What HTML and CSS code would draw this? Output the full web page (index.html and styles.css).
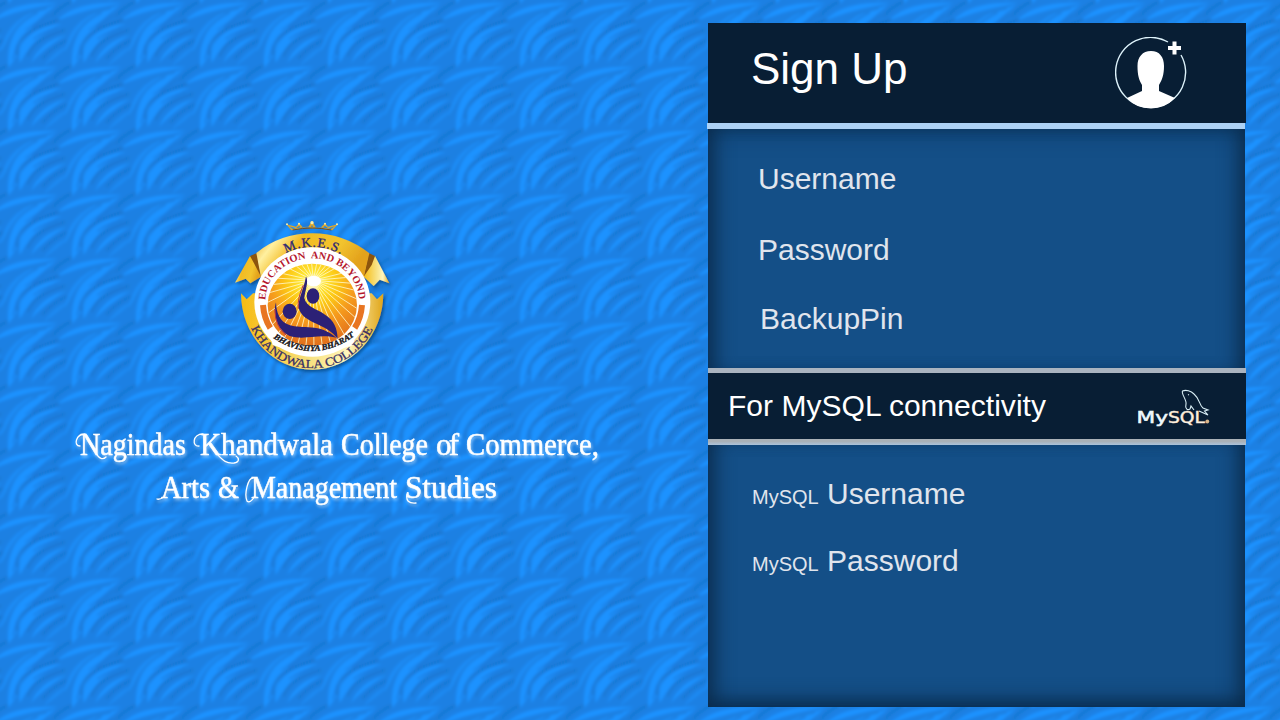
FILE: index.html
```html
<!DOCTYPE html>
<html lang="en">
<head>
<meta charset="utf-8">
<title>Sign Up</title>
<link rel="stylesheet" href="styles.css">
</head>
<body>
<svg class="backdrop" width="1280" height="720" aria-hidden="true">
  <defs>
    <filter id="soft" x="0" y="0" width="100%" height="100%"><feGaussianBlur stdDeviation="1.500"/></filter>
    <g id="ripples">
      <g fill="#1f92ff">
        <path d="M-8 21C8 5 32 2 58 3C36 7 14 12 -8 21Z"/>
        <path d="M8 68C7 45 12 18 56 5C38 19 26 32 22 43C18 53 15 61 8 68Z"/>
        <path d="M20 63C15 42 34 25 62 24C44 31 32 42 20 63Z"/>
        <path d="M31 63C36 49 50 38 66 35C52 44 42 51 31 63Z"/>
        <path d="M44 66C50 56 60 48 70 45C62 52 54 59 44 66Z" fill="#1d8af3"/>
        <path d="M1 52C3 36 12 20 34 12C20 25 10 36 1 52Z" fill="#1e8cf6"/>
      </g>
      <g fill="none" stroke-linecap="round" opacity=".8">
        <path d="M-2 36C10 17 27 11 46 9" stroke="#1a7fdf" stroke-width="1.800"/>
        <path d="M2 56C9 36 17 22 37 13" stroke="#1a7edf" stroke-width="2"/>
        <path d="M17 54C17 37 29 29 58 20" stroke="#1874cf" stroke-width="3"/>
        <path d="M26 30L48 14M33 27L53 14" stroke="#1878d8" stroke-width="1.500"/>
        <path d="M28 55C33 43 44 37 64 30" stroke="#1874cf" stroke-width="2.800"/>
        <path d="M34 39C39 34 47 31 57 28" stroke="#1878d8" stroke-width="1.500"/>
        <path d="M43 58C49 51 57 45 66 41" stroke="#1875d1" stroke-width="3"/>
        <path d="M13 59L17 45" stroke="#1878d8" stroke-width="1.500"/>
        <path d="M53 15C59 8 63 5 71 2" stroke="#1876d3" stroke-width="4"/>
      </g>
    </g>
    <pattern id="waves" width="64" height="64" patternUnits="userSpaceOnUse">
      <rect width="64" height="64" fill="#1b80e3"/>
      <use href="#ripples" x="-64"/><use href="#ripples" x="64"/><use href="#ripples" y="-64"/><use href="#ripples" y="64"/><use href="#ripples"/>
    </pattern>
  </defs>
  <rect x="-10" y="-10" width="1300" height="740" fill="url(#waves)" filter="url(#soft)"/>
</svg>

<main class="page">
  <section class="brand">
    <svg class="crest" viewBox="0 0 525 510" role="img" aria-label="College crest">
      <defs>
        <linearGradient id="gold" x1="0" y1="0" x2="1" y2="0.3">
          <stop offset="0" stop-color="#e9a512"/><stop offset=".2" stop-color="#fff0a0"/><stop offset=".4" stop-color="#f3bb22"/><stop offset=".75" stop-color="#f2c42f"/><stop offset="1" stop-color="#e3a21c"/>
        </linearGradient>
        <linearGradient id="gold2" x1="0" y1="0" x2="1" y2="0">
          <stop offset="0" stop-color="#f6bb12"/><stop offset=".5" stop-color="#f8e283"/><stop offset=".75" stop-color="#fff6bd"/><stop offset="1" stop-color="#e0a519"/>
        </linearGradient>
        <radialGradient id="sun" cx=".5" cy=".22" r=".8">
          <stop offset="0" stop-color="#fff"/><stop offset=".14" stop-color="#ffe936"/><stop offset=".36" stop-color="#fcc715"/><stop offset=".6" stop-color="#f59a1d"/><stop offset="1" stop-color="#df6a1c"/>
        </radialGradient>
        <filter id="drop" x="-10%" y="-10%" width="125%" height="125%"><feDropShadow dx="5" dy="7" stdDeviation="4" flood-color="#06376c" flood-opacity=".65"/></filter>
        <clipPath id="disc"><ellipse cx="262" cy="285" rx="134" ry="124"/></clipPath>
        <path id="arcTop" d="M96 276A166 166 0 0 1 428 276"/>
        <path id="arcMotto" d="M121 272A140 127 0 0 1 401 272"/>
        <path id="arcBharat" d="M137 378Q262 470 394 374"/>
        <path id="arcCollege" d="M66 314A200 200 0 0 0 458 314"/>
      </defs>
      <g filter="url(#drop)">
        <path d="M48 250L65 268L84 250L440 250L456 268L475 250A213.500 229 0 0 1 48 250Z" fill="url(#gold2)"/>
        <path d="M75 138L30 218L62 206L76 220L108 200L96 150Z" fill="url(#gold)"/>
        <path d="M450 138L493 220L464 209L446 228L416 200L424 145Z" fill="url(#gold2)"/>
        <path d="M96 129L108 200L87 160L75 138ZM431 129L416 200L440 165L450 138Z" fill="#8c5411"/>
        <path d="M94 129Q166 70 262 70Q356 70 433 130L416 202H108Z" fill="url(#gold)"/>
      </g>
      <ellipse cx="262" cy="276" rx="174" ry="164" fill="#fff"/>
      <ellipse cx="262" cy="285" rx="134" ry="124" fill="url(#sun)"/>
      <g clip-path="url(#disc)" stroke="#fff6c8" stroke-width="2.500">
        <path d="M265 211L80 170M265 211L80 200M265 211L80 230M265 211L80 263M265 211L80 300M265 211L80 345M265 211L90 400M265 211L120 430M265 211L155 430M265 211L185 430M265 211L212 430M265 211L240 430M265 211L267 430M265 211L295 430M265 211L325 430M265 211L355 430M265 211L390 430M265 211L440 430M265 211L450 375M265 211L450 330M265 211L450 290M265 211L450 255M265 211L450 225M265 211L450 195M265 211L450 165M265 211L430 120M265 211L390 110M265 211L350 110M265 211L315 110M265 211L285 110M265 211L255 110M265 211L225 110M265 211L190 110M265 211L145 110M265 211L100 130"/>
      </g>
      <path d="M130 360Q262 454 395 358L385 405Q262 450 143 405Z" fill="#fff"/>
      <ellipse cx="266" cy="213" rx="22" ry="16" fill="#fff"/>
      <path d="M114 285Q117 325 136 354M411 285Q408 325 389 354" fill="none" stroke="#e87522" stroke-width="18"/>
      <g fill="#2c2176">
        <path d="M243 199C252 215 240 244 238 264C243 291 276 296 300 314C328 332 337 355 338 387C308 340 234 342 221 294C219 266 236 240 243 199Z"/>
        <path d="M153 277C154 307 163 335 193 345C232 358 284 339 334 383C277 371 238 392 194 378C160 363 141 315 153 277Z"/>
      </g>
      <path d="M235 225Q216 268 220 296M150 297Q149 350 184 376" fill="none" stroke="#b8334b" stroke-width="3"/>
      <g fill="#2c2176"><ellipse cx="194" cy="304" rx="21" ry="23"/><ellipse cx="264" cy="258" rx="19" ry="23"/></g>
      <g class="crest-text">
        <text font-size="40" fill="#2d2775" stroke="#2d2775"><textPath href="#arcTop" startOffset="178" textLength="172">M.K.E.S.</textPath></text>
        <text font-size="31" font-weight="bold" fill="#b5172d"><textPath href="#arcMotto" startOffset="2" textLength="414" lengthAdjust="spacingAndGlyphs" xml:space="preserve">EDUCATION  AND BEYOND</textPath></text>
        <text font-size="25" font-weight="bold" font-style="italic" fill="#161214" stroke="#161214"><textPath href="#arcBharat" startOffset="10" textLength="262" lengthAdjust="spacingAndGlyphs">BHAVISHYA BHARAT</textPath></text>
        <text font-size="36" fill="#393064" stroke="#393064" stroke-width=".800"><textPath href="#arcCollege" startOffset="42" textLength="460" lengthAdjust="spacingAndGlyphs">KHANDWALA COLLEGE</textPath></text>
      </g>
      <path d="M199 61L184 43L213 50L222 40L235 53L250 51L261 33L272 51L286 53L300 40L309 50L338 43L322 61Q262 48 199 61ZM192 49L204 57Q231 49 258 51L261 45L264 51Q292 50 317 57L330 49L310 55L300 48L288 56L261 50L235 56L222 48L213 55Z" fill="#dca62d" fill-rule="evenodd"/>
      <path d="M203 60Q262 48 319 60" fill="none" stroke="#6b4b2a" stroke-width="3"/>
      <g fill="#fff0a5"><circle cx="261" cy="38" r="5"/><circle cx="222" cy="41" r="3"/><circle cx="300" cy="41" r="3"/><circle cx="186" cy="43" r="3"/><circle cx="336" cy="43" r="3"/></g>
    </svg>

    <svg class="college" viewBox="0 0 560 100">
      <g class="college-name">
        <text x="20" y="35" textLength="106" lengthAdjust="spacingAndGlyphs">Nagindas</text>
        <text x="140" y="35" textLength="133" lengthAdjust="spacingAndGlyphs">Khandwala</text>
        <text x="281" y="35" textLength="87" lengthAdjust="spacingAndGlyphs">College</text>
        <text x="376" y="35" textLength="23">of</text>
        <text x="406" y="35" textLength="133" lengthAdjust="spacingAndGlyphs">Commerce,</text>
        <text x="101" y="78" textLength="49" lengthAdjust="spacingAndGlyphs">Arts</text>
        <text x="158" y="78" textLength="21" lengthAdjust="spacingAndGlyphs">&amp;</text>
        <text x="191" y="78" textLength="146" lengthAdjust="spacingAndGlyphs">Management</text>
        <text x="345" y="78" textLength="92" lengthAdjust="spacingAndGlyphs">Studies</text>
      </g>
      <g class="swash">
        <path d="M25 14C16 14 13 26 20 26M143 14C132 14 132 27 139 26M156 33C162 39 165 44 174 43C180 42 179 38 176 36M36 33C39 39 43 40 46 37"/>
        <path d="M104 77Q99 80 97 79M193 58C188 58 184 74 187 81Q190 84 195 76M347 74Q345 84 356 83"/>
      </g>
    </svg>
  </section>

  <section class="panel">
    <header class="head">
      <h1>Sign Up</h1>
      <svg class="avatar" viewBox="0 0 72 72" aria-hidden="true">
        <path d="M53 5A35 35 0 1 0 66 18" fill="none" stroke="#def3fb" stroke-width="1.400"/>
        <path d="M36 14C44.500 14 49 20 49 29C49 38 47 43 44 48V54L60 61Q50 71.500 36 71.500Q21 71.500 12 61L27 54V48C24 43 22.500 38 22.500 29C22.500 20 27.500 14 36 14Z" fill="#fff"/>
        <path d="M53 11H66M59.500 4.500V17.500" stroke="#fff" stroke-width="4"/>
      </svg>
    </header>
    <div class="rule rule-top"></div>
    <div class="fields account">
      <label>Username</label>
      <label>Password</label>
      <label class="pin">BackupPin</label>
    </div>
    <div class="rule rule-mid"></div>
    <header class="subhead">
      <h2>For MySQL connectivity</h2>
      <svg class="mysql" viewBox="0 0 90 50">
        <text x="6.500" y="39" textLength="31.500" lengthAdjust="spacingAndGlyphs" fill="#eef9fc" stroke="#eef9fc">My</text>
        <text x="38" y="39" textLength="37" lengthAdjust="spacingAndGlyphs" fill="#fffaf0" stroke="#f3dcc0">SQL</text>
        <circle cx="77.300" cy="37.500" r="1.900" fill="#d8b58a"/>
        <path d="M60 25C57 27 55 24 56 20C57 16 51 10 52.500 7C56 5.500 61 7 64 10C70 15 69 21 73 24L78 26L74.500 27L78 31L69 27M60 25L61 22L64 26M58 10.500L59 11" fill="none" stroke="#d9eef5" stroke-width="1.100"/>
      </svg>
    </header>
    <div class="rule rule-low"></div>
    <div class="fields database">
      <label><small>MySQL</small> Username</label>
      <label><small>MySQL</small> Password</label>
    </div>
  </section>
</main>
</body>
</html>
```

FILE: styles.css
```css
body { margin: 0; overflow: hidden; background: #1b83e8; font-family: "Liberation Sans", Arial, sans-serif; }
.backdrop { position: absolute; inset: 0; z-index: -1; }
.page { display: flex; width: 1280px; height: 720px; }
.brand { width: 707px; }
.crest { display: block; width: 175px; height: 170px; margin: 210px 0 0 225px; }
.crest-text { font-family: "Liberation Serif", serif; }
.college { display: block; width: 560px; height: 100px; margin: 40px 0 0 60px; filter: drop-shadow(1px 2px 1.5px rgba(190, 225, 255, .65)); }
.college-name { font: 31px "Liberation Serif", serif; fill: #fff; stroke: #fff; stroke-width: .5px; }
.swash { fill: none; stroke: #fff; stroke-width: 1.3px; stroke-linecap: round; }
.panel { width: 539px; padding-top: 23px; }
.head, .subhead { display: flex; box-sizing: border-box; width: 538px; margin-left: 1px; background: #081e34; color: #fff; }
h1, h2 { margin: 0; font-weight: 400; line-height: 1; }
.head { height: 100px; padding: 24px 59px 0 43px; justify-content: space-between; }
h1 { font-size: 44px; }
.avatar { width: 72px; height: 72px; margin-top: -10px; }
.rule { width: 538px; }
.rule-top { height: 6px; background: #acd1f5; }
.rule-mid { height: 5px; margin-left: 1px; background: #aab4c0; }
.rule-low { height: 6px; margin-left: 1px; background: linear-gradient(#aab1b7 40%, #abc3dc); }
.fields { display: flex; flex-direction: column; box-sizing: border-box; width: 537px; margin-left: 1px; background: #144f87; color: #e0e5ed; font-size: 30px; line-height: 30px; }
.account { height: 239px; padding: 35px 0 0 50px; box-shadow: inset 18px 0 20px -12px #0b2c4d, inset -18px 0 20px -12px #0b2c4d, inset 0 14px 24px -14px #0b3359; }
.account label + label { margin-top: 41px; }
.account label.pin { margin: 39px 0 0 2px; }
.subhead { height: 66px; padding: 18px 26px 0 20px; justify-content: space-between; }
h2 { font-size: 30px; letter-spacing: .03px; }
.mysql { width: 90px; height: 50px; margin-top: -7px; font: 15px "DejaVu Sans", sans-serif; stroke-width: .5px; }
.database { height: 262px; padding: 34px 0 0 44px; gap: 37px; box-shadow: inset 18px 0 20px -12px #0b2c4d, inset -18px 0 20px -12px #0b2c4d, inset 0 -18px 20px -12px #0b2c4d; }
.database label { height: 30px; }
small { font-size: 20px; }
```
